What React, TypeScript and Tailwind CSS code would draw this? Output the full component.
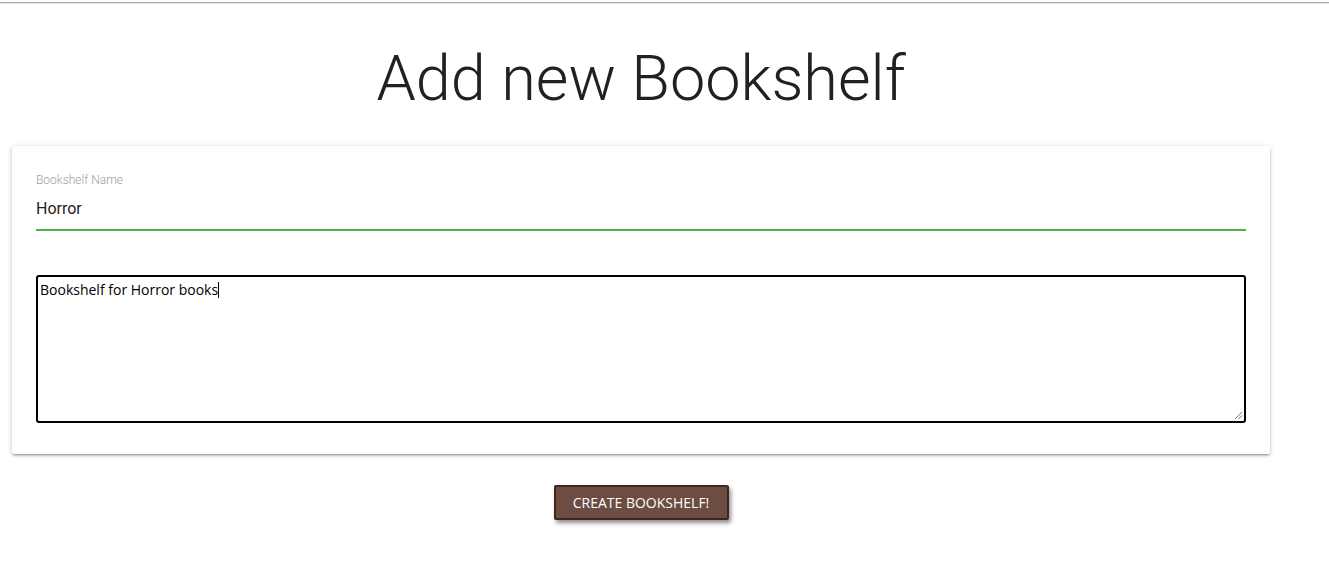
import React from "react";

const App = () => {
  return (
    <div className="min-h-[569px] w-[1329px] bg-white font-['Roboto',sans-serif]">
      {/* top rule */}
      <div className="h-[2px] bg-white" />
      <div className="h-[1px] bg-[#a9a9a9]" />
      <div className="h-[1px] bg-[#e6e6e6]" />

      <div className="ml-[12px] w-[1258px]">
        <h1 className="mt-[40px] text-center text-[63px] font-light leading-[1.1] text-[#212121]">
          Add new Bookshelf
        </h1>

        {/* Card */}
        <div className="mt-[33px] rounded-[2px] bg-white px-[24px] pt-[26px] pb-[31px] shadow-[0_2px_2px_0_rgba(0,0,0,0.14),0_3px_1px_-2px_rgba(0,0,0,0.12),0_1px_5px_0_rgba(0,0,0,0.2)]">
          <label className="block text-[12px] leading-[16px] font-light text-[#9e9e9e]">
            Bookshelf Name
          </label>
          <div className="flex h-[43px] items-center border-b-2 border-[#4caf50] text-[16px] text-[#222]">
            Horror
          </div>

          {/* Textarea */}
          <div className="relative mt-[44px] h-[148px] rounded-[3px] border-2 border-black px-[2px] py-[2px] font-['Open_Sans',sans-serif] text-[14px] leading-[18px] text-black">
            <span>Bookshelf for Horror books</span>
            <span className="inline-block h-[16px] w-[1px] translate-y-[3px] bg-black" />
            <svg
              className="absolute right-[1px] bottom-[1px]"
              width="9"
              height="9"
              viewBox="0 0 9 9"
            >
              <line x1="1" y1="8" x2="8" y2="1" stroke="#777" strokeWidth="1" />
              <line x1="4.5" y1="8" x2="8" y2="4.5" stroke="#777" strokeWidth="1" />
            </svg>
          </div>
        </div>

        <div className="mt-[31px] flex justify-center">
          <button className="h-[35px] w-[175px] rounded-[2px] border-2 border-[#3e2723] bg-[#6d4c41] font-['Open_Sans',sans-serif] text-[14px] uppercase text-white shadow-[2px_3px_4px_rgba(0,0,0,0.45)]">
            Create Bookshelf!
          </button>
        </div>
      </div>
    </div>
  );
};

export default App;
